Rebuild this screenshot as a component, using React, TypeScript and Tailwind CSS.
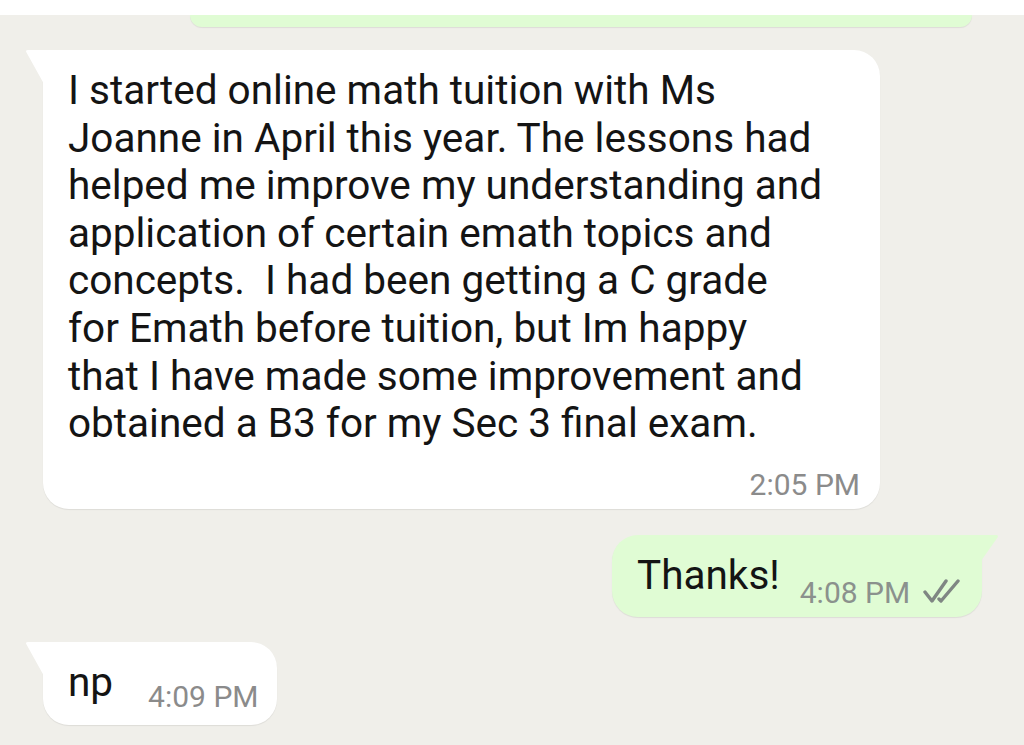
import React from "react";

const font = { fontFamily: "Roboto, 'Noto Sans', Arial, sans-serif" };

const lines = [
  "I started online math tuition with Ms",
  "Joanne in April this year. The lessons had",
  "helped me improve my understanding and",
  "application of certain emath topics and",
  "concepts.  I had been getting a C grade",
  "for Emath before tuition, but Im happy",
  "that I have made some improvement and",
  "obtained a B3 for my Sec 3 final exam.",
];

function TailLeft({ color }: { color: string }) {
  return (
    <svg className="absolute -left-[18px] top-0" width="19" height="34" viewBox="0 0 19 34">
      <path d="M19 0 L3 0 Q0 0 1.5 2.5 L19 34 Z" fill={color} />
    </svg>
  );
}

function TailRight({ color }: { color: string }) {
  return (
    <svg className="absolute -right-[17px] top-0" width="18" height="26" viewBox="0 0 18 26">
      <path d="M0 0 L15 0 Q18 0 16.5 2.5 L0 26 Z" fill={color} />
    </svg>
  );
}

function DoubleCheck() {
  return (
    <svg width="40" height="26" viewBox="0 0 40 26" fill="none" stroke="#7f8683" strokeWidth="3.4" strokeLinecap="round" strokeLinejoin="round">
      <path d="M3 13 L10 22 L24 2" />
      <path d="M17 20 L19 22 L36 2" />
    </svg>
  );
}

export default function App() {
  return (
    <div className="w-[1024px] h-[745px] overflow-hidden bg-[#f0efea] flex flex-col" style={font}>
      <div className="h-[15px] bg-white shrink-0" />
      {/* previous outgoing message, mostly scrolled away */}
      <div className="ml-[190px] w-[782px] h-[12px] shrink-0 bg-[#e0fcd4] rounded-b-[16px] shadow-[0_1px_1px_rgba(0,0,0,0.08)]" />

      {/* incoming long message */}
      <div className="relative mt-[23px] ml-[43px] w-[837px] shrink-0 bg-white rounded-[26px] rounded-tl-none shadow-[0_1px_1px_rgba(0,0,0,0.08)] pl-[25px] pr-[20px] pt-[17px] pb-[6px]">
        <TailLeft color="#ffffff" />
        <div className="text-[40.5px] leading-[47.6px] text-[#141414]">
          {lines.map((l) => (
            <div key={l} className="whitespace-pre">{l}</div>
          ))}
        </div>
        <div className="mt-[19px] text-right text-[30px] leading-[36px] text-[#8b8b8b]">2:05 PM</div>
      </div>

      {/* outgoing reply */}
      <div className="relative mt-[26px] ml-[612px] w-[370px] h-[82px] shrink-0 bg-[#e0fcd4] rounded-[26px] rounded-tr-none shadow-[0_1px_1px_rgba(0,0,0,0.08)] flex items-start pl-[25px]">
        <TailRight color="#e0fcd4" />
        <span className="mt-[17px] text-[40.5px] leading-[47px] text-[#141414]">Thanks!</span>
        <span className="ml-[20px] mt-[40px] text-[30px] leading-[36px] text-[#8b918d]">4:08 PM</span>
        <span className="ml-[12px] mt-[44px]">
          <DoubleCheck />
        </span>
      </div>

      {/* incoming short message */}
      <div className="relative mt-[25px] ml-[43px] w-[234px] h-[83px] shrink-0 bg-white rounded-[26px] rounded-tl-none shadow-[0_1px_1px_rgba(0,0,0,0.08)] flex items-start pl-[25px]">
        <TailLeft color="#ffffff" />
        <span className="mt-[17px] text-[40.5px] leading-[47px] text-[#141414]">np</span>
        <span className="ml-[35px] mt-[37px] text-[30px] leading-[36px] text-[#8b8b8b]">4:09 PM</span>
      </div>
    </div>
  );
}
